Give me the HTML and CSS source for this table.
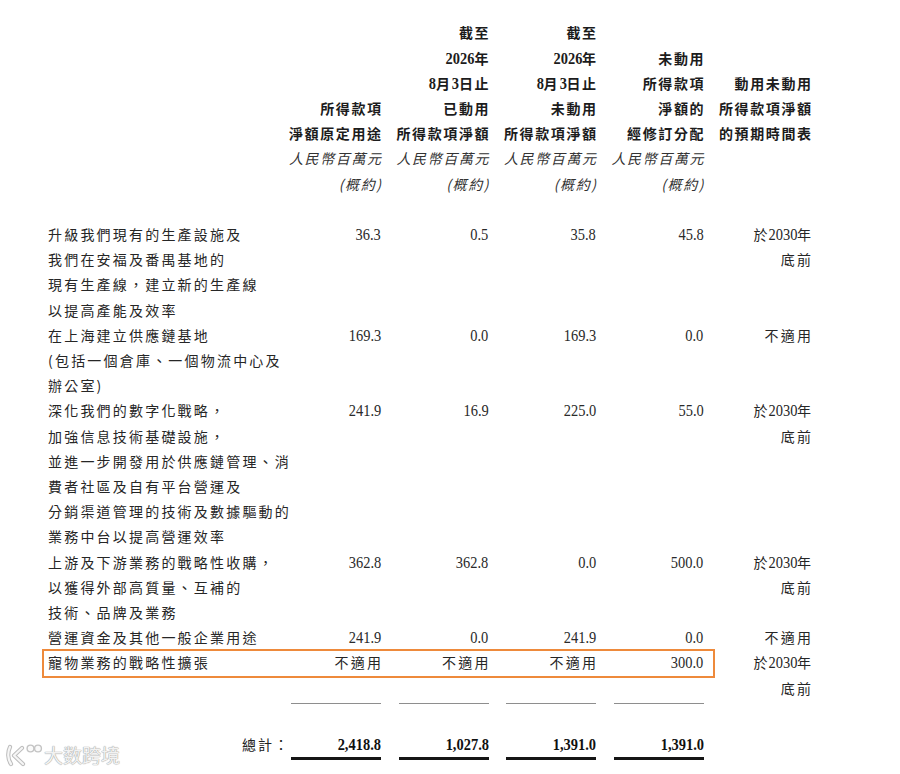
FILE: index.html
```html
<!DOCTYPE html>
<html lang="zh-Hant">
<head>
<meta charset="utf-8">
<title>所得款項用途</title>
<link rel="stylesheet" href="styles.css">
</head>
<body>
<div class="page">
  <div class="grid head">
    <div class="hcell"></div>
    <div class="hcell">
      <div>所得款項</div>
      <div>淨額原定用途</div>
      <div class="it">人民幣百萬元</div>
      <div class="it">(概約)</div>
    </div>
    <div class="hcell">
      <div>截至</div>
      <div><span class="d d4">2026</span>年</div>
      <div><span class="d d1">8</span>月<span class="d d1">3</span>日止</div>
      <div>已動用</div>
      <div>所得款項淨額</div>
      <div class="it">人民幣百萬元</div>
      <div class="it">(概約)</div>
    </div>
    <div class="hcell">
      <div>截至</div>
      <div><span class="d d4">2026</span>年</div>
      <div><span class="d d1">8</span>月<span class="d d1">3</span>日止</div>
      <div>未動用</div>
      <div>所得款項淨額</div>
      <div class="it">人民幣百萬元</div>
      <div class="it">(概約)</div>
    </div>
    <div class="hcell">
      <div>未動用</div>
      <div>所得款項</div>
      <div>淨額的</div>
      <div>經修訂分配</div>
      <div class="it">人民幣百萬元</div>
      <div class="it">(概約)</div>
    </div>
    <div class="hcell">
      <div>動用未動用</div>
      <div>所得款項淨額</div>
      <div>的預期時間表</div>
      <div class="blank"></div>
      <div class="blank"></div>
    </div>
  </div>

  <div class="grid row">
    <div class="label">
      <div>升級我們現有的生產設施及</div>
      <div>我們在安福及番禺基地的</div>
      <div>現有生產線，建立新的生產線</div>
      <div>以提高產能及效率</div>
    </div>
    <div class="val"><span class="n">36.3</span></div>
    <div class="val"><span class="n">0.5</span></div>
    <div class="val"><span class="n">35.8</span></div>
    <div class="val"><span class="n">45.8</span></div>
    <div class="val"><div class="t">於<span class="d d4">2030</span>年</div><div class="t">底前</div></div>
  </div>

  <div class="grid row">
    <div class="label">
      <div>在上海建立供應鏈基地</div>
      <div>(包括一個倉庫、一個物流中心及</div>
      <div>辦公室)</div>
    </div>
    <div class="val"><span class="n">169.3</span></div>
    <div class="val"><span class="n">0.0</span></div>
    <div class="val"><span class="n">169.3</span></div>
    <div class="val"><span class="n">0.0</span></div>
    <div class="val"><div class="t">不適用</div></div>
  </div>

  <div class="grid row">
    <div class="label">
      <div>深化我們的數字化戰略，</div>
      <div>加強信息技術基礎設施，</div>
      <div>並進一步開發用於供應鏈管理、消</div>
      <div>費者社區及自有平台營運及</div>
      <div>分銷渠道管理的技術及數據驅動的</div>
      <div>業務中台以提高營運效率</div>
    </div>
    <div class="val"><span class="n">241.9</span></div>
    <div class="val"><span class="n">16.9</span></div>
    <div class="val"><span class="n">225.0</span></div>
    <div class="val"><span class="n">55.0</span></div>
    <div class="val"><div class="t">於<span class="d d4">2030</span>年</div><div class="t">底前</div></div>
  </div>

  <div class="grid row">
    <div class="label">
      <div>上游及下游業務的戰略性收購，</div>
      <div>以獲得外部高質量、互補的</div>
      <div>技術、品牌及業務</div>
    </div>
    <div class="val"><span class="n">362.8</span></div>
    <div class="val"><span class="n">362.8</span></div>
    <div class="val"><span class="n">0.0</span></div>
    <div class="val"><span class="n">500.0</span></div>
    <div class="val"><div class="t">於<span class="d d4">2030</span>年</div><div class="t">底前</div></div>
  </div>

  <div class="grid row">
    <div class="label">
      <div>營運資金及其他一般企業用途</div>
    </div>
    <div class="val"><span class="n">241.9</span></div>
    <div class="val"><span class="n">0.0</span></div>
    <div class="val"><span class="n">241.9</span></div>
    <div class="val"><span class="n">0.0</span></div>
    <div class="val"><div class="t">不適用</div></div>
  </div>

  <div class="grid row hlrow">
    <div class="hl"></div>
    <div class="label">
      <div>寵物業務的戰略性擴張</div>
    </div>
    <div class="val"><div class="t">不適用</div></div>
    <div class="val"><div class="t">不適用</div></div>
    <div class="val"><div class="t">不適用</div></div>
    <div class="val"><span class="n">300.0</span></div>
    <div class="val"><div class="t">於<span class="d d4">2030</span>年</div><div class="t">底前</div></div>
  </div>

  <div class="grid rules">
    <div></div>
    <div class="rule"></div>
    <div class="rule"></div>
    <div class="rule"></div>
    <div class="rule"></div>
    <div></div>
  </div>

  <div class="grid totals">
    <div class="totlabel">總計：</div>
    <div class="tot"><span class="n b">2,418.8</span></div>
    <div class="tot"><span class="n b">1,027.8</span></div>
    <div class="tot"><span class="n b">1,391.0</span></div>
    <div class="tot"><span class="n b">1,391.0</span></div>
    <div></div>
  </div>

  <div class="watermark">
    <svg class="wlogo" width="38" height="24" viewBox="0 0 38 24" aria-hidden="true">
      <g fill="none" stroke="#bdbdbd" stroke-width="4.2" stroke-linecap="round" stroke-linejoin="round">
        <path d="M5 4 C2.5 9 2.5 16 6 21"/>
        <path d="M17 5 L9 12.5 L18 21"/>
      </g>
      <g fill="none" stroke="#f6f6f6" stroke-width="2.2" stroke-linecap="round" stroke-linejoin="round">
        <path d="M5 4 C2.5 9 2.5 16 6 21"/>
        <path d="M17 5 L9 12.5 L18 21"/>
      </g>
      <circle cx="25.5" cy="5.5" r="3.4" fill="#fafafa" stroke="#c4c4c4" stroke-width="1.4"/>
      <circle cx="33" cy="5.5" r="3.4" fill="#fafafa" stroke="#c4c4c4" stroke-width="1.4"/>
    </svg>
    <span class="wtext">大数跨境</span>
  </div>
</div>
</body>
</html>
```

FILE: styles.css
```css
* {
  box-sizing: border-box;
}

body {
  margin: 0;
  background: #ffffff;
  font-family: "Noto Sans CJK TC", "Noto Sans", sans-serif;
  font-size: 14px;
  line-height: 25.2px;
  color: #262626;
}

.page {
  position: relative;
  width: 900px;
  height: 774px;
  padding: 20.4px 0 0 48px;
  overflow: hidden;
}

.grid {
  display: grid;
  grid-template-columns: 225.5px repeat(5, 107.5px);
}

/* header */
.head {
  font-weight: 700;
  color: #1c1c1c;
  letter-spacing: 1.6px;
  margin-bottom: 25.2px;
}

.hcell {
  display: flex;
  flex-direction: column;
  justify-content: flex-end;
  text-align: right;
  white-space: nowrap;
  margin-right: -1.6px;
}

.hcell .it {
  font-style: italic;
  font-weight: 400;
  color: #333333;
}

.blank {
  height: 25.2px;
}

.d {
  display: inline-block;
  font-family: "Liberation Serif", serif;
  font-size: 17px;
  letter-spacing: 0;
  transform: scaleX(0.85);
  transform-origin: 50% 50%;
}

.head .d {
  font-weight: 700;
}

.d4 {
  margin: 0 -0.15em;
}

.val .d4 {
  margin-left: -0.25em;
}

.d1 {
  margin: 0 -0.04em 0 -0.035em;
}

/* body rows */
.row {
  position: relative;
}

.label {
  white-space: nowrap;
  letter-spacing: 2.2px;
}

.val {
  text-align: right;
  white-space: nowrap;
}

.val .t {
  letter-spacing: 2.2px;
  margin-right: -2.2px;
}

.n {
  display: inline-block;
  font-family: "Liberation Serif", serif;
  font-size: 17px;
  letter-spacing: 0;
  color: #2a2a2a;
  transform: scaleX(0.85);
  transform-origin: 100% 50%;
}

.n.b {
  font-weight: 700;
  color: #111111;
}

.hl {
  position: absolute;
  left: -6px;
  top: -1.4px;
  width: 673px;
  height: 29px;
  border: 2px solid #ee8a3b;
  pointer-events: none;
}

/* rules and totals */
.rules {
  margin-top: 2px;
}

.rule {
  width: 90px;
  justify-self: end;
  border-top: 1.5px solid #8e8e8e;
}

.totals {
  margin-top: 28px;
}

.totlabel {
  justify-self: end;
  margin-right: -16.5px;
  letter-spacing: 2px;
  white-space: nowrap;
  color: #222222;
}

.tot {
  width: 90px;
  justify-self: end;
  text-align: right;
  border-bottom: 3px solid #151515;
}

/* watermark */
.watermark {
  position: absolute;
  left: 5px;
  top: 743px;
  display: flex;
  align-items: center;
  gap: 1px;
}

.wtext {
  font-family: "Noto Sans CJK SC", sans-serif;
  font-size: 19px;
  line-height: 24px;
  letter-spacing: 0;
  color: #f2f2f2;
  text-shadow: 0 0 1px #9a9a9a, 0 0 1px #9a9a9a;
}
```
